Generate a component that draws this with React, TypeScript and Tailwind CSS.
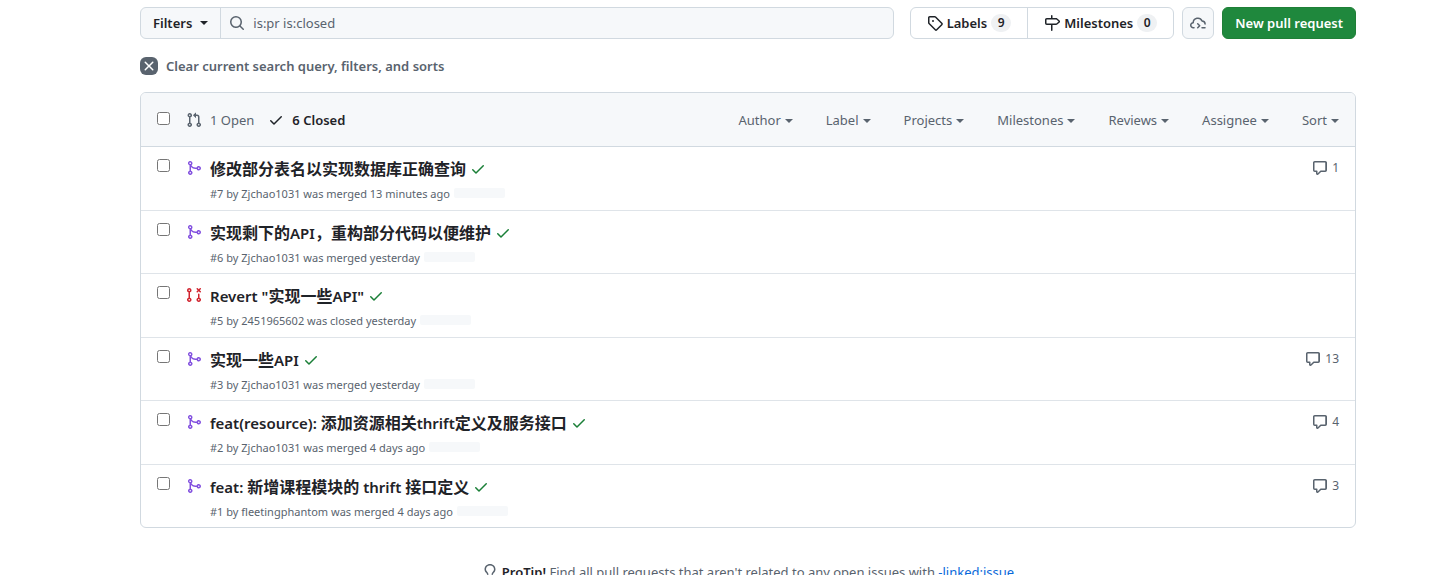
import { useState } from "react";
import type { ReactNode } from "react";

/* -----------------------------
   Icons
----------------------------- */
const PATHS = {
  merge:
    "M5.45 5.154A4.25 4.25 0 0 0 9.25 7.5h1.378a2.251 2.251 0 1 1 0 1.5H9.25A5.734 5.734 0 0 1 5 7.123v3.505a2.25 2.25 0 1 1-1.5 0V5.372a2.25 2.25 0 1 1 1.95-.218ZM4.25 13.5a.75.75 0 1 0 0-1.5.75.75 0 0 0 0 1.5Zm8.5-4.5a.75.75 0 1 0 0-1.5.75.75 0 0 0 0 1.5ZM5 3.25a.75.75 0 1 0 0 .005V3.25Z",
  pull: "M1.5 3.25a2.25 2.25 0 1 1 3 2.122v5.256a2.251 2.251 0 1 1-1.5 0V5.372A2.25 2.25 0 0 1 1.5 3.25Zm5.677-.177L9.573.677A.25.25 0 0 1 10 .854V2.5h1A2.5 2.5 0 0 1 13.5 5v5.628a2.251 2.251 0 1 1-1.5 0V5a1 1 0 0 0-1-1h-1v1.646a.25.25 0 0 1-.427.177L7.177 3.427a.25.25 0 0 1 0-.354ZM3.75 2.5a.75.75 0 1 0 0 1.5.75.75 0 0 0 0-1.5Zm0 9.5a.75.75 0 1 0 0 1.5.75.75 0 0 0 0-1.5Zm8.25.75a.75.75 0 1 0 1.5 0 .75.75 0 0 0-1.5 0Z",
  closed:
    "M3.25 1A2.25 2.25 0 0 1 4 5.372v5.256a2.251 2.251 0 1 1-1.5 0V5.372A2.251 2.251 0 0 1 3.25 1Zm9.5 5.5a.75.75 0 0 1 .75.75v3.378a2.251 2.251 0 1 1-1.5 0V7.25a.75.75 0 0 1 .75-.75Zm-2.03-5.273a.75.75 0 0 1 1.06 0l.97.97.97-.97a.748.748 0 0 1 1.265.332.75.75 0 0 1-.205.729l-.97.97.97.97a.751.751 0 0 1-.018 1.042.751.751 0 0 1-1.042.018l-.97-.97-.97.97a.749.749 0 0 1-1.275-.326.749.749 0 0 1 .215-.734l.97-.97-.97-.97a.75.75 0 0 1 0-1.06ZM2.5 3.25a.75.75 0 1 0 1.5 0 .75.75 0 0 0-1.5 0ZM3.25 12a.75.75 0 1 0 0 1.5.75.75 0 0 0 0-1.5Zm9.5 0a.75.75 0 1 0 0 1.5.75.75 0 0 0 0-1.5Z",
  check:
    "M13.78 4.22a.75.75 0 0 1 0 1.06l-7.25 7.25a.75.75 0 0 1-1.06 0L2.22 9.28a.751.751 0 0 1 .018-1.042.751.751 0 0 1 1.042-.018L6 10.94l6.72-6.72a.75.75 0 0 1 1.06 0Z",
  tag: "M1 7.775V2.75C1 1.784 1.784 1 2.75 1h5.025c.464 0 .91.184 1.238.513l6.25 6.25a1.75 1.75 0 0 1 0 2.474l-5.026 5.026a1.75 1.75 0 0 1-2.474 0l-6.25-6.25A1.752 1.752 0 0 1 1 7.775Zm1.5 0c0 .066.026.13.073.177l6.25 6.25a.25.25 0 0 0 .354 0l5.025-5.025a.25.25 0 0 0 0-.354l-6.25-6.25a.25.25 0 0 0-.177-.073H2.75a.25.25 0 0 0-.25.25ZM6 5a1 1 0 1 1 0 2 1 1 0 0 1 0-2Z",
  milestone:
    "M7.75 0a.75.75 0 0 1 .75.75V3h3.634c.414 0 .814.147 1.13.414l2.07 1.75a1.75 1.75 0 0 1 0 2.672l-2.07 1.75a1.75 1.75 0 0 1-1.13.414H8.5v5.25a.75.75 0 0 1-1.5 0V10H2.75A1.75 1.75 0 0 1 1 8.25v-3.5C1 3.784 1.784 3 2.75 3H7V.75A.75.75 0 0 1 7.75 0Zm4.384 8.5a.25.25 0 0 0 .161-.06l2.07-1.75a.248.248 0 0 0 0-.38l-2.07-1.75a.25.25 0 0 0-.161-.06H2.75a.25.25 0 0 0-.25.25v3.5c0 .138.112.25.25.25h9.384Z",
  search:
    "M10.68 11.74a6 6 0 0 1-7.922-8.982 6 6 0 0 1 8.982 7.922l3.04 3.04a.749.749 0 0 1-.326 1.275.749.749 0 0 1-.734-.215ZM11.5 7a4.499 4.499 0 1 0-8.997 0A4.499 4.499 0 0 0 11.5 7Z",
  x: "M3.72 3.72a.75.75 0 0 1 1.06 0L8 6.94l3.22-3.22a.749.749 0 0 1 1.275.326.749.749 0 0 1-.215.734L9.06 8l3.22 3.22a.749.749 0 0 1-.326 1.275.749.749 0 0 1-.734-.215L8 9.06l-3.22 3.22a.751.751 0 0 1-1.042-.018.751.751 0 0 1-.018-1.042L6.94 8 3.72 4.78a.75.75 0 0 1 0-1.06Z",
  comment:
    "M1 2.75C1 1.784 1.784 1 2.75 1h10.5c.966 0 1.75.784 1.75 1.75v7.5A1.75 1.75 0 0 1 13.25 12H9.06l-2.573 2.573A1.458 1.458 0 0 1 4 13.543V12H2.75A1.75 1.75 0 0 1 1 10.25Zm1.75-.25a.25.25 0 0 0-.25.25v7.5c0 .138.112.25.25.25h2a.75.75 0 0 1 .75.75v2.19l2.72-2.72a.749.749 0 0 1 .53-.22h4.25a.25.25 0 0 0 .25-.25v-7.5a.25.25 0 0 0-.25-.25Z",
  bulb: "M8 1.5c-2.363 0-4 1.69-4 3.75 0 .984.424 1.625.984 2.304l.214.253c.223.264.47.556.673.848.284.411.537.896.621 1.49a.75.75 0 0 1-1.484.211c-.04-.282-.163-.547-.37-.847a8.456 8.456 0 0 0-.542-.68c-.084-.1-.173-.205-.268-.32C3.201 7.75 2.5 6.766 2.5 5.25 2.5 2.31 4.863 0 8 0s5.5 2.31 5.5 5.25c0 1.516-.701 2.5-1.328 3.259-.095.115-.184.22-.268.319-.207.245-.383.453-.541.681-.208.3-.33.565-.37.847a.751.751 0 0 1-1.485-.212c.084-.593.337-1.078.621-1.489.203-.292.45-.584.673-.848.075-.088.147-.173.213-.253.561-.679.985-1.32.985-2.304 0-2.06-1.637-3.75-4-3.75ZM5.75 12h4.5a.75.75 0 0 1 0 1.5h-4.5a.75.75 0 0 1 0-1.5ZM6 15.25a.75.75 0 0 1 .75-.75h2.5a.75.75 0 0 1 0 1.5h-2.5a.75.75 0 0 1-.75-.75Z",
};

const Icon = ({
  name,
  className = "",
}: {
  name: keyof typeof PATHS;
  className?: string;
}) => (
  <svg
    viewBox="0 0 16 16"
    fill="currentColor"
    aria-hidden="true"
    className={`size-4 shrink-0 ${className}`}
  >
    <path d={PATHS[name]} />
  </svg>
);

const CloudIcon = () => (
  <svg
    viewBox="0 0 16 16"
    fill="none"
    stroke="currentColor"
    strokeWidth="1.5"
    strokeLinecap="round"
    strokeLinejoin="round"
    aria-hidden="true"
    className="size-4"
  >
    <path d="M4 12.7H3.3A2.5 2.5 0 0 1 3.2 7.7 4.6 4.6 0 0 1 12 5.9a3.2 3.2 0 0 1 3.1 3.2" />
    <path d="m7.7 8.8 2 2-2 2M12 12.8h3" />
  </svg>
);

const Caret = () => (
  <span
    aria-hidden="true"
    className="border-x-4 border-t-4 border-x-transparent border-t-current"
  />
);

/* -----------------------------
   Data
----------------------------- */
type PullRequest = {
  number: number;
  title: string;
  state: "merged" | "closed";
  author: string;
  when: string;
  comments: number;
};

const pulls: PullRequest[] = [
  {
    number: 7,
    title: "修改部分表名以实现数据库正确查询",
    state: "merged",
    author: "Zjchao1031",
    when: "13 minutes ago",
    comments: 1,
  },
  {
    number: 6,
    title: "实现剩下的API，重构部分代码以便维护",
    state: "merged",
    author: "Zjchao1031",
    when: "yesterday",
    comments: 0,
  },
  {
    number: 5,
    title: 'Revert "实现一些API"',
    state: "closed",
    author: "2451965602",
    when: "yesterday",
    comments: 0,
  },
  {
    number: 3,
    title: "实现一些API",
    state: "merged",
    author: "Zjchao1031",
    when: "yesterday",
    comments: 13,
  },
  {
    number: 2,
    title: "feat(resource): 添加资源相关thrift定义及服务接口",
    state: "merged",
    author: "Zjchao1031",
    when: "4 days ago",
    comments: 4,
  },
  {
    number: 1,
    title: "feat: 新增课程模块的 thrift 接口定义",
    state: "merged",
    author: "fleetingphantom",
    when: "4 days ago",
    comments: 3,
  },
];

const menus = [
  "Author",
  "Label",
  "Projects",
  "Milestones",
  "Reviews",
  "Assignee",
  "Sort",
];

const Counter = ({ children }: { children: ReactNode }) => (
  <span className="min-w-5 rounded-full bg-[#eff1f3] px-1.5 text-center text-xs leading-[18px]">
    {children}
  </span>
);

const Checkbox = ({ label }: { label: string }) => (
  <input
    type="checkbox"
    aria-label={label}
    className="size-[13px] shrink-0 self-start"
  />
);

// Latin runs are set a step smaller than the Chinese around them
const Title = ({ text }: { text: string }) => (
  <a href="#" className="text-base leading-6 font-semibold text-[#1f2328]">
    {text.split(/([\x20-\x7e]+)/).map((run, i) =>
      i % 2 === 1 ? (
        <span key={i} className="text-[15px]">
          {run}
        </span>
      ) : (
        run
      )
    )}
  </a>
);

/* -----------------------------
   One pull request
----------------------------- */
const PullRow = ({ pull }: { pull: PullRequest }) => (
  <li className="flex border-t border-[#d1d9e0]/70 px-4 pt-2.5 pb-[7px] first:border-[#d1d9e0]">
    <div className="flex pt-0.5">
      <Checkbox label={`Select #${pull.number}`} />
    </div>
    <div className="ml-4 flex pt-[3px]">
      {pull.state === "merged" ? (
        <Icon name="merge" className="text-[#8250df]" />
      ) : (
        <Icon name="closed" className="text-[#d1242f]" />
      )}
    </div>
    <div className="ml-2 min-w-0 flex-1">
      <div className="flex h-6 items-center gap-1">
        <Title text={pull.title} />
        <Icon name="check" className="text-[#1a7f37]" />
      </div>
      <div className="mt-[5px] flex items-center gap-1 text-[11px] leading-normal text-[#59636e]">
        <span>
          #{pull.number} by {pull.author} was {pull.state} {pull.when}
        </span>
        <span className="mb-0.5 h-2.5 w-[51px] rounded-xs bg-[#f6f8fa]" />
      </div>
    </div>
    {pull.comments > 0 && (
      <a
        href="#"
        className="flex items-center gap-1 self-start pt-px text-xs leading-5 text-[#59636e]"
      >
        <Icon name="comment" />
        {pull.comments}
      </a>
    )}
  </li>
);

export default function App() {
  const [query, setQuery] = useState("is:pr is:closed");

  return (
    <main className="pt-[7px] pr-[77px] pl-[140px] font-['Noto_Sans','Noto_Sans_CJK_SC',sans-serif] text-[13px] leading-5 text-[#1f2328]">
      {/* Search bar and actions */}
      <div className="flex h-8 gap-4">
        <div className="flex flex-1 rounded-md border border-[#d1d9e0] bg-[#f6f8fa]">
          <button className="flex items-center gap-2 border-r border-[#d1d9e0] px-3 font-semibold">
            Filters
            <Caret />
          </button>
          <label className="flex flex-1 items-center gap-2 pl-2 text-[#59636e]">
            <Icon name="search" />
            <input
              aria-label="Search pull requests"
              value={query}
              onChange={(e) => setQuery(e.target.value)}
              className="min-w-0 flex-1 bg-transparent outline-none"
            />
          </label>
        </div>

        <div className="flex gap-2">
          <div className="flex divide-x divide-[#d1d9e0] rounded-md border border-[#d1d9e0] font-semibold">
            <a href="#" className="flex items-center gap-1 px-4">
              <Icon name="tag" />
              Labels
              <Counter>9</Counter>
            </a>
            <a href="#" className="flex items-center gap-1 px-4">
              <Icon name="milestone" />
              Milestones
              <Counter>0</Counter>
            </a>
          </div>
          <button
            aria-label="Open in cloud"
            className="flex w-8 items-center justify-center rounded-md border border-[#d1d9e0] bg-[#f6f8fa] text-[#59636e]"
          >
            <CloudIcon />
          </button>
          <button className="rounded-md border border-[#1f7f37] bg-[#1f883d] px-3 font-semibold text-white">
            New pull request
          </button>
        </div>
      </div>

      <button className="mt-[17px] flex items-center gap-2 font-semibold text-[#59636e]">
        <span className="flex size-[18px] items-center justify-center rounded-md bg-[#59636e] text-white">
          <Icon name="x" />
        </span>
        Clear current search query, filters, and sorts
      </button>

      {/* Pull request list */}
      <section className="mt-4 overflow-hidden rounded-md border border-[#d1d9e0]">
        <div className="flex items-center bg-[#f6f8fa] px-4 pt-[17px] pb-4 text-[#59636e]">
          <div className="flex self-start pt-0.5">
            <Checkbox label="Select all" />
          </div>
          <a href="#" className="ml-4 flex items-center gap-2">
            <Icon name="pull" />1 Open
          </a>
          <a
            href="#"
            className="ml-3.5 flex items-center gap-2 font-semibold text-[#1f2328]"
          >
            <Icon name="check" />6 Closed
          </a>
          <div className="ml-auto flex gap-[33px]">
            {menus.map((menu) => (
              <button key={menu} className="flex items-center gap-1">
                {menu}
                <span className="flex pt-0.5">
                  <Caret />
                </span>
              </button>
            ))}
          </div>
        </div>
        <ul>
          {pulls.map((pull) => (
            <PullRow key={pull.number} pull={pull} />
          ))}
        </ul>
      </section>

      <p className="mt-[34px] flex items-center justify-center gap-1 text-[#59636e]">
        <Icon name="bulb" />
        <span>
          <strong className="font-semibold text-[#1f2328]">ProTip!</strong> Find
          all pull requests that aren't related to any open issues with{" "}
          <a href="#" className="text-[#0969da]">
            -linked:issue
          </a>
        </span>
      </p>
    </main>
  );
}
